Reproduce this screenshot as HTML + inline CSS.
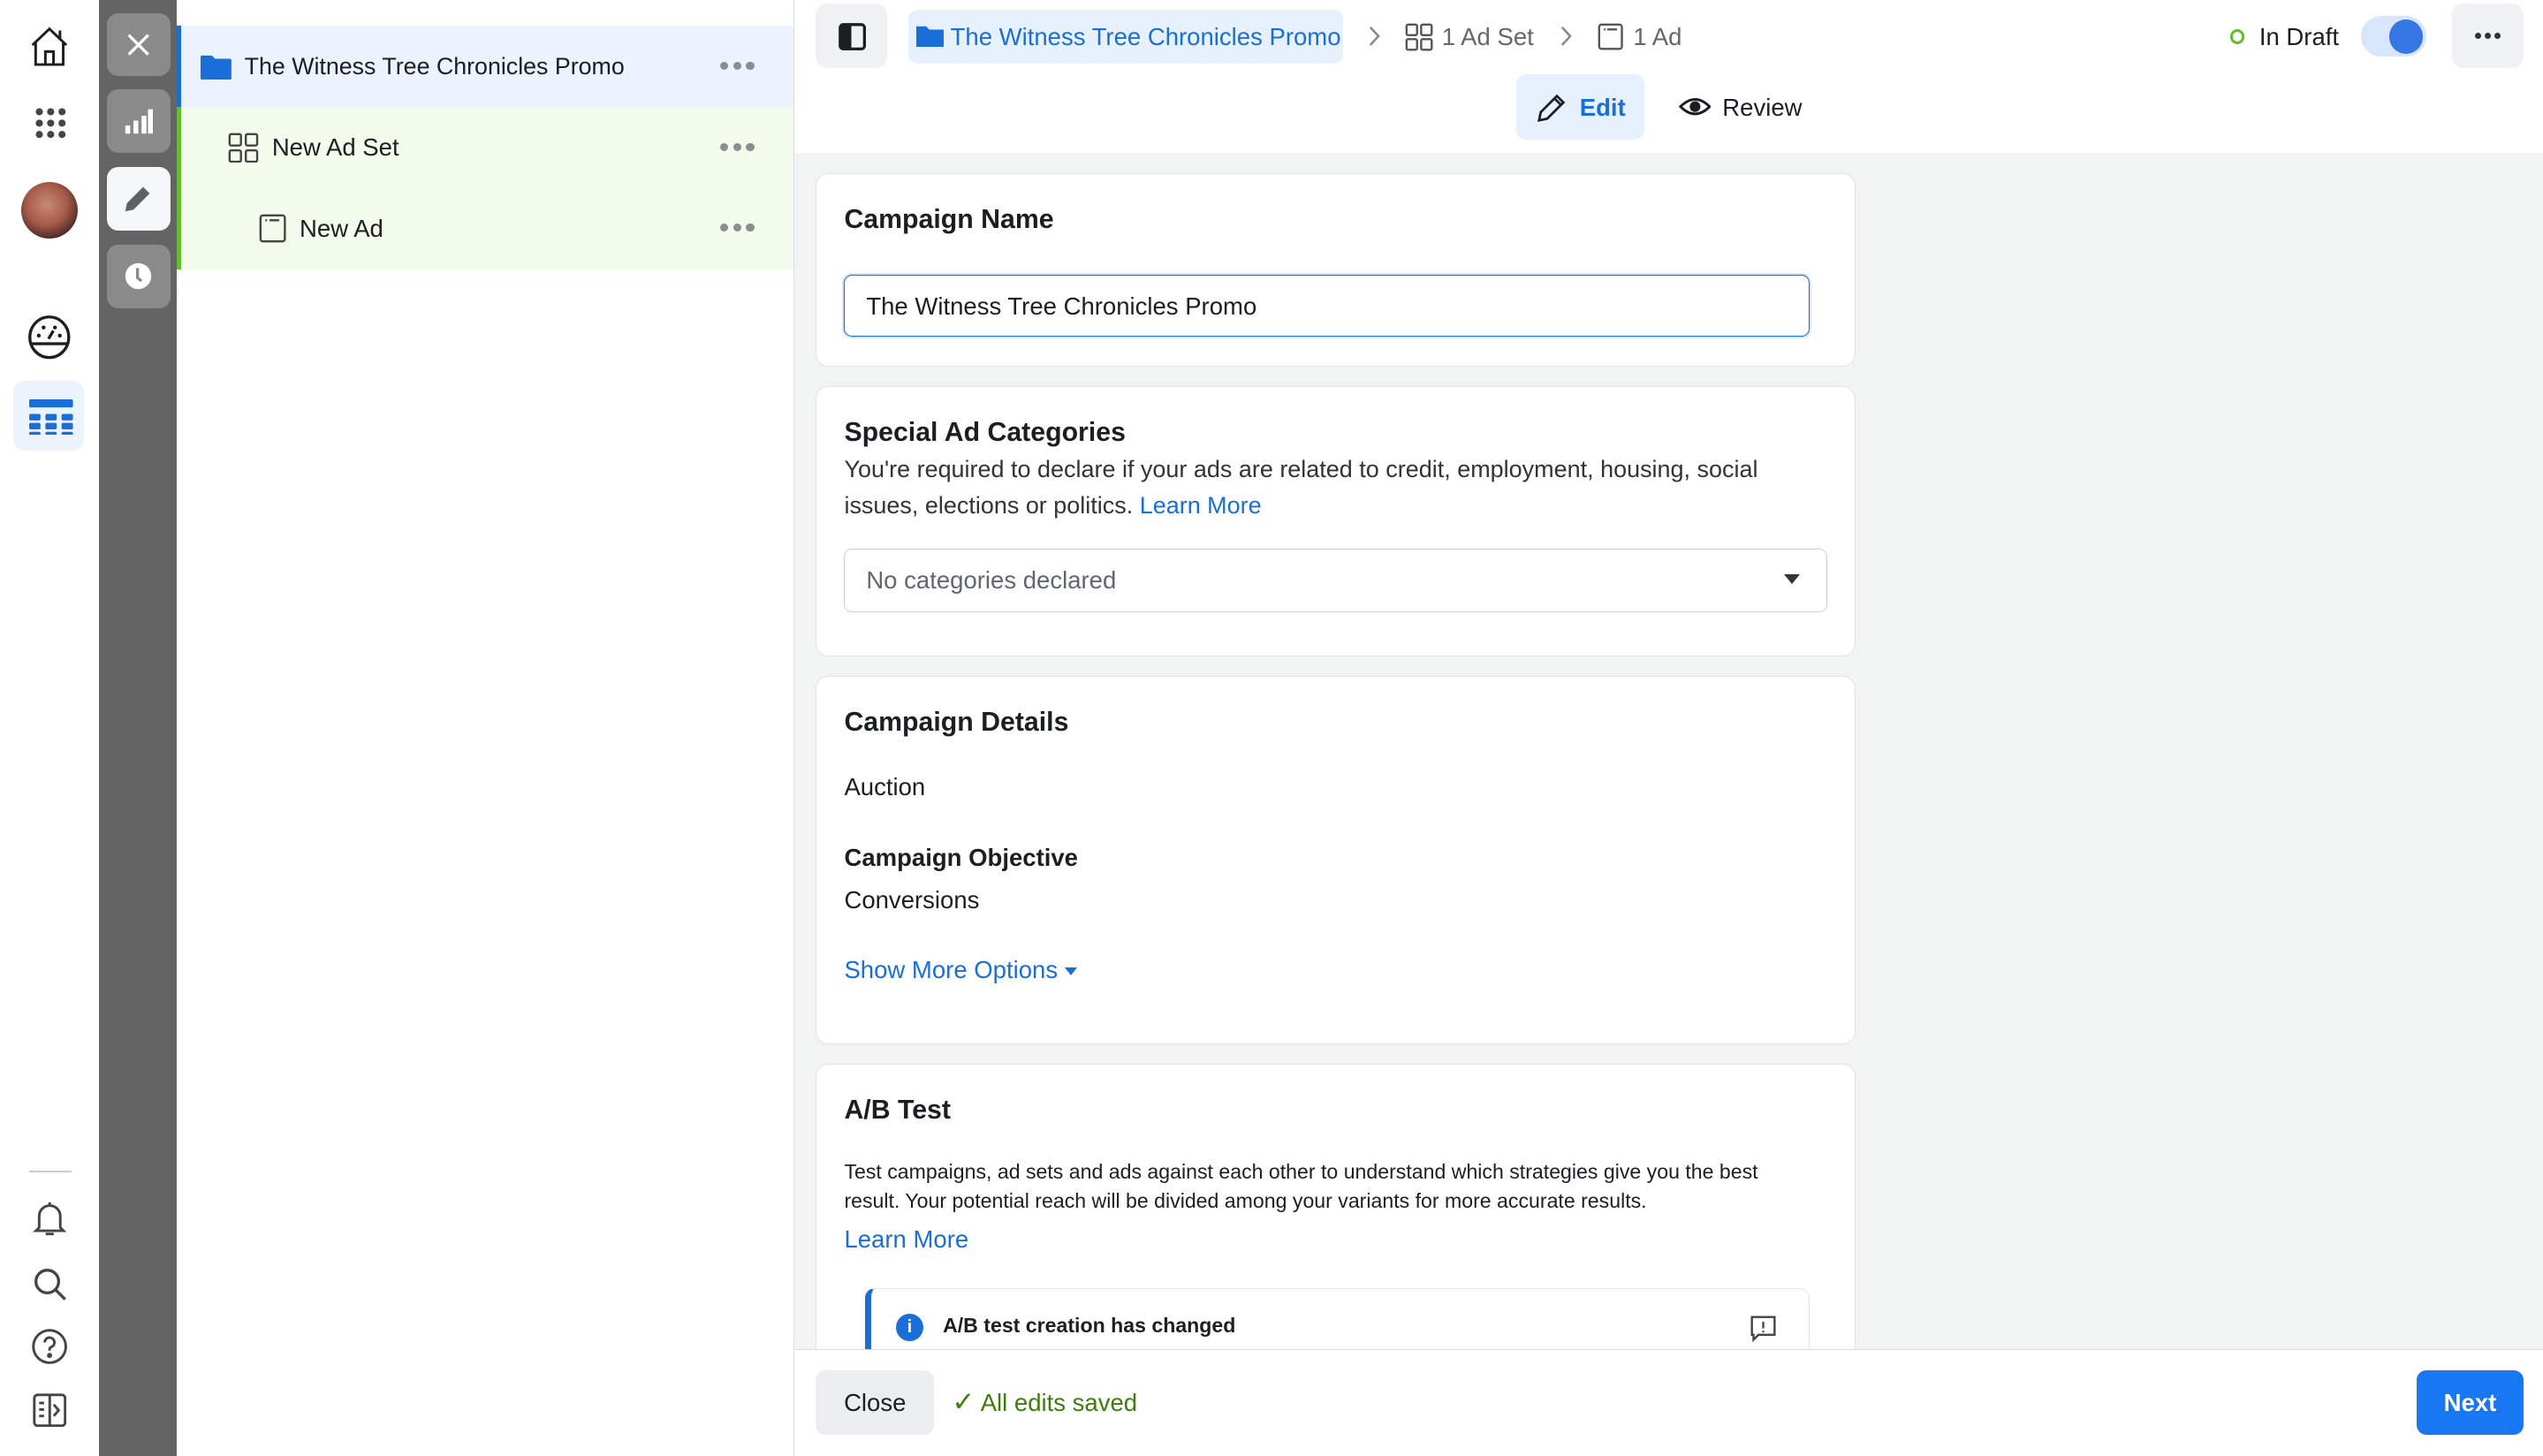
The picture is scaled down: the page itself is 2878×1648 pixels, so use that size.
<!DOCTYPE html>
<html><head><meta charset="utf-8"><style>
*{box-sizing:border-box;margin:0;padding:0}
html,body{width:2878px;height:1648px;overflow:hidden;background:#fff}
#r{zoom:1.8355;width:1568px;height:898px;position:relative;font-family:"Liberation Sans",Arial,sans-serif;color:#1c1e21;overflow:hidden}
.a{position:absolute}
.nav{left:0;top:0;width:61px;height:898px;background:#fff}
.rail{left:61px;top:0;width:48px;height:898px;background:#646464}
.rb{left:5px;width:39px;height:39px;border-radius:7px;background:#8a8a8a;display:flex;align-items:center;justify-content:center}
.tree{left:109px;top:0;width:381px;height:898px;background:#fff;border-right:1px solid #dadde1}
.row{left:0;width:380px;height:50px;display:flex;align-items:center;font-size:15px}
.dots{position:absolute;right:24px;top:22px;display:flex;gap:3px}
.dots i{width:5px;height:5px;border-radius:50%;background:#8a8d91;display:block}
.main{left:490px;top:0;width:1078px;height:898px;background:#f2f3f3}
.card{left:13px;width:641px;background:#fff;border:1px solid #e3e4e6;border-radius:8px}
.h{font-size:17px;font-weight:bold;position:absolute;left:17px}
.t{position:absolute;left:17px;font-size:15px}
.blue{color:#1a6ed8}
</style></head><body><div id="r">

<div class="a nav">
 <svg class="a" style="left:18px;top:16px" width="25" height="26" viewBox="0 0 25 26" fill="none" stroke="#1c1e21" stroke-width="1.6"><path d="M2 12 L12.5 2 L23 12 M4 10 V24 H21 V10 M10 24 V16 H15 V24 M19 8 V3"/></svg>
 <svg class="a" style="left:21px;top:66px" width="20" height="20"><g fill="#444"><circle cx="3" cy="3" r="2.2"/><circle cx="10" cy="3" r="2.2"/><circle cx="17" cy="3" r="2.2"/><circle cx="3" cy="10" r="2.2"/><circle cx="10" cy="10" r="2.2"/><circle cx="17" cy="10" r="2.2"/><circle cx="3" cy="17" r="2.2"/><circle cx="10" cy="17" r="2.2"/><circle cx="17" cy="17" r="2.2"/></g></svg>
 <div class="a" style="left:13px;top:112px;width:35px;height:35px;border-radius:50%;background:radial-gradient(circle at 45% 40%,#c98a78 0,#a55a48 45%,#3a2220 80%)"></div>
 <svg class="a" style="left:17px;top:194px" width="27" height="28" fill="none" stroke="#1c1e21" stroke-width="1.8"><ellipse cx="13.5" cy="14" rx="12" ry="12.5"/><path d="M2 18 H25 M13 15 L16 10"/><g fill="#1c1e21" stroke="none"><circle cx="7" cy="13" r="1.2"/><circle cx="10" cy="8" r="1.2"/><circle cx="17" cy="8" r="1.2"/><circle cx="20" cy="13" r="1.2"/></g></svg>
 <div class="a" style="left:8px;top:235px;width:44px;height:43px;border-radius:7px;background:#ebf3fd"></div>
 <svg class="a" style="left:18px;top:246px" width="27" height="22" fill="#1a6ed8"><rect x="0" y="0" width="27" height="5" rx="1"/><rect x="0" y="9" width="7" height="4" rx="1"/><rect x="10" y="9" width="7" height="4" rx="1"/><rect x="20" y="9" width="7" height="4" rx="1"/><rect x="0" y="14.5" width="7" height="4" rx="1"/><rect x="10" y="14.5" width="7" height="4" rx="1"/><rect x="20" y="14.5" width="7" height="4" rx="1"/><rect x="0" y="20" width="7" height="3" rx="1"/><rect x="10" y="20" width="7" height="3" rx="1"/><rect x="20" y="20" width="7" height="3" rx="1"/></svg>
 <div class="a" style="left:18px;top:722px;width:26px;height:1px;background:#ccc"></div>
 <svg class="a" style="left:20px;top:741px" width="21" height="22" fill="none" stroke="#444" stroke-width="1.6"><path d="M4 16 V9 a6.5 6.5 0 0 1 13 0 V16 L19 18 H2 Z M8 20 h5 M10.5 2 V0.5"/></svg>
 <svg class="a" style="left:20px;top:781px" width="22" height="22" fill="none" stroke="#444" stroke-width="1.8"><circle cx="9" cy="9" r="7"/><path d="M14 14 L20 20"/></svg>
 <svg class="a" style="left:19px;top:819px" width="23" height="23" fill="none" stroke="#444" stroke-width="1.6"><circle cx="11.5" cy="11.5" r="10"/><path d="M8.5 9 a3 3 0 1 1 4 2.8 c-1 .4 -1 1 -1 2.2"/><circle cx="11.5" cy="17" r=".8" fill="#444"/></svg>
 <svg class="a" style="left:20px;top:859px" width="21" height="21" fill="none" stroke="#444" stroke-width="1.6"><rect x="1" y="1" width="19" height="19" rx="2"/><path d="M10.5 1 V20 M4 6 h3 M4 10 h3 M4 14 h3 M13 7 l3 3.5 l-3 3.5"/></svg>
</div>

<div class="a rail">
 <div class="a rb" style="top:8px"><svg width="16" height="16" stroke="#fff" stroke-width="1.8"><path d="M2 2 L14 14 M14 2 L2 14"/></svg></div>
 <div class="a rb" style="top:55px"><svg width="18" height="18" fill="#fff"><rect x="1" y="12" width="3" height="5"/><rect x="6" y="9" width="3" height="8"/><rect x="11" y="6" width="3" height="11"/><rect x="15" y="2" width="3" height="15"/></svg></div>
 <div class="a rb" style="top:103px;background:#f5f6f7"><svg width="18" height="18" fill="#606060"><path d="M1 17 L2 12 L12 2 L16 6 L6 16 Z"/></svg></div>
 <div class="a rb" style="top:151px"><svg width="18" height="18"><circle cx="9" cy="9" r="8" fill="#fff"/><path d="M8.5 4 V10 L11 12" stroke="#8a8a8a" stroke-width="1.8" fill="none"/></svg></div>
</div>

<div class="a tree">
 <div class="a row" style="top:16px;background:#ebf3fe;border-left:3px solid #1a6ed8">
  <svg style="margin-left:12px" width="19" height="16" fill="#1a6ed8"><path d="M0 2 a1 1 0 0 1 1-1 H7 L9 3 H18 a1 1 0 0 1 1 1 V15 a1 1 0 0 1 -1 1 H1 a1 1 0 0 1 -1-1 Z"/></svg>
  <span style="margin-left:8px;font-size:14.6px">The Witness Tree Chronicles Promo</span>
  <div class="dots"><i></i><i></i><i></i></div></div>
 <div class="a row" style="top:66px;background:#f2fbec;border-left:3px solid #63be2a">
  <svg style="margin-left:29px" width="19" height="19" fill="none" stroke="#444" stroke-width="1.3"><rect x="1" y="1" width="7" height="7" rx="1"/><rect x="11" y="1" width="7" height="7" rx="1"/><rect x="1" y="11" width="7" height="7" rx="1"/><rect x="11" y="11" width="7" height="7" rx="1"/></svg>
  <span style="margin-left:8px">New Ad Set</span>
  <div class="dots"><i></i><i></i><i></i></div></div>
 <div class="a row" style="top:116px;background:#f2fbec;border-left:3px solid #63be2a">
  <svg style="margin-left:48px" width="17" height="18" fill="none" stroke="#444" stroke-width="1.3"><rect x="1" y="1" width="15" height="16" rx="1.5"/><path d="M4 4 h1 M6.5 4 h6"/></svg>
  <span style="margin-left:8px">New Ad</span>
  <div class="dots"><i></i><i></i><i></i></div></div>
</div>

<div class="a main">
 <div class="a" style="left:0;top:0;width:1078px;height:94px;background:#fff"></div>
 <div class="a" style="left:13px;top:2px;width:44px;height:40px;border-radius:7px;background:#f0f1f2"></div>
 <svg class="a" style="left:27px;top:14px" width="17" height="17" fill="none" stroke="#1c1e21" stroke-width="1.8"><rect x="1" y="1" width="15" height="15" rx="2"/><rect x="2" y="2" width="5" height="13" fill="#1c1e21"/></svg>
 <div class="a" style="left:70px;top:6px;height:33px;border-radius:6px;background:#e7f1fd;width:268px"></div>
 <svg class="a" style="left:75px;top:15px" width="17" height="14" fill="#1a6ed8"><path d="M0 1 H6 L8 3 H17 V14 H0 Z"/></svg>
 <div class="a" style="left:96px;top:14px;font-size:15px;color:#1a6ed8">The Witness Tree Chronicles Promo</div>
 <svg class="a" style="left:354px;top:16px" width="8" height="13" fill="none" stroke="#888" stroke-width="1.4"><path d="M1 1 L6 6.5 L1 12"/></svg>
 <svg class="a" style="left:376px;top:14px" width="18" height="18" fill="none" stroke="#555" stroke-width="1.3"><rect x="1" y="1" width="6.5" height="6.5" rx="1"/><rect x="10" y="1" width="6.5" height="6.5" rx="1"/><rect x="1" y="10" width="6.5" height="6.5" rx="1"/><rect x="10" y="10" width="6.5" height="6.5" rx="1"/></svg>
 <div class="a" style="left:399px;top:14px;font-size:15px;color:#65676b">1 Ad Set</div>
 <svg class="a" style="left:472px;top:16px" width="8" height="13" fill="none" stroke="#888" stroke-width="1.4"><path d="M1 1 L6 6.5 L1 12"/></svg>
 <svg class="a" style="left:495px;top:14px" width="16" height="17" fill="none" stroke="#555" stroke-width="1.3"><rect x="1" y="1" width="14" height="15" rx="1.5"/><path d="M4 4 h1 M6 4 h6"/></svg>
 <div class="a" style="left:517px;top:14px;font-size:15px;color:#65676b">1 Ad</div>
 <div class="a" style="left:885px;top:18px;width:9px;height:9px;border-radius:50%;border:2px solid #63be2a"></div>
 <div class="a" style="left:903px;top:14px;font-size:15px">In Draft</div>
 <div class="a" style="left:966px;top:10px;width:40px;height:25px;border-radius:13px;background:#d7e6fb"></div>
 <div class="a" style="left:983px;top:12px;width:21px;height:21px;border-radius:50%;background:#3578e5"></div>
 <div class="a" style="left:1022px;top:2px;width:44px;height:40px;border-radius:7px;background:#f0f1f2"></div>
 <div class="a" style="left:1036px;top:20px;display:flex;gap:2px"><i style="width:4px;height:4px;border-radius:50%;background:#333;display:block"></i><i style="width:4px;height:4px;border-radius:50%;background:#333;display:block"></i><i style="width:4px;height:4px;border-radius:50%;background:#333;display:block"></i></div>
 <div class="a" style="left:445px;top:46px;width:79px;height:40px;border-radius:6px;background:#e7f1fd"></div>
 <svg class="a" style="left:458px;top:57px" width="18" height="18" fill="none" stroke="#1c1e21" stroke-width="1.5"><path d="M1 17 L2 12 L12 2 L16 6 L6 16 Z M10.5 3.5 L14.5 7.5"/></svg>
 <div class="a" style="left:484px;top:58px;font-size:15px;font-weight:bold;color:#1a6ed8">Edit</div>
 <svg class="a" style="left:545px;top:58px" width="20" height="16" fill="none" stroke="#1c1e21" stroke-width="1.6"><path d="M1 8 Q10 -1 19 8 Q10 17 1 8 Z"/><circle cx="10" cy="8" r="2.5" fill="#1c1e21"/></svg>
 <div class="a" style="left:572px;top:58px;font-size:15px">Review</div>

 <div class="a card" style="top:107px;height:119px">
  <div class="h" style="top:19px;font-size:16.5px">Campaign Name</div>
  <div class="a" style="left:17px;top:62px;width:595px;height:38px;border:1px solid #1a6ed8;border-radius:5px;box-shadow:0 0 0 1px #d0e2fb;font-size:15px;padding:10px 13px">The Witness Tree Chronicles Promo</div>
 </div>
 <div class="a card" style="top:238px;height:167px">
  <div class="h" style="top:19px;font-size:16.5px">Special Ad Categories</div>
  <div class="t" style="top:40px;line-height:22px;width:600px;color:#333;font-size:14.7px">You're required to declare if your ads are related to credit, employment, housing, social issues, elections or politics. <span class="blue">Learn More</span></div>
  <div class="a" style="left:17px;top:100px;width:606px;height:39px;border:1px solid #ccd0d5;border-radius:5px;font-size:15px;color:#606770;padding:10px 13px">No categories declared<span style="position:absolute;right:16px;top:15px;border-left:5px solid transparent;border-right:5px solid transparent;border-top:6px solid #333"></span></div>
 </div>
 <div class="a card" style="top:417px;height:227px">
  <div class="h" style="top:19px;font-size:16.5px">Campaign Details</div>
  <div class="t" style="top:59px">Auction</div>
  <div class="t" style="top:103px;font-weight:bold">Campaign Objective</div>
  <div class="t" style="top:129px">Conversions</div>
  <div class="t blue" style="top:172px">Show More Options <span style="display:inline-block;border-left:4px solid transparent;border-right:4px solid transparent;border-top:5px solid #1a6ed8;vertical-align:middle"></span></div>
 </div>
 <div class="a card" style="top:656px;height:260px">
  <div class="h" style="top:19px;font-size:16.5px">A/B Test</div>
  <div class="t" style="top:57px;font-size:12.6px;line-height:18px;width:600px">Test campaigns, ad sets and ads against each other to understand which strategies give you the best result. Your potential reach will be divided among your variants for more accurate results.</div>
  <div class="t blue" style="top:99px">Learn More</div>
  <div class="a" style="left:30px;top:138px;width:582px;height:80px;border:1px solid #e3e4e6;border-left:4px solid #1a6ed8;border-radius:6px">
   <div class="a" style="left:15px;top:15px;width:17px;height:17px;border-radius:50%;background:#1a6ed8;color:#fff;font-size:11px;font-weight:bold;text-align:center;line-height:17px">i</div>
   <div class="a" style="left:44px;top:15px;font-size:12.6px;font-weight:bold">A/B test creation has changed</div>
   <svg class="a" style="left:541px;top:15px" width="18" height="18" fill="none" stroke="#444" stroke-width="1.3"><path d="M2 2 H16 V13 H6 L3 16 V13 H2 Z M9 5 V9 M9 10.5 V11.5"/></svg>
  </div>
 </div>

 <div class="a" style="left:0;top:832px;width:1078px;height:66px;background:#fff;border-top:1px solid #dadde1"></div>
 <div class="a" style="left:13px;top:845px;width:73px;height:40px;border-radius:6px;background:#ebedf0;font-size:15px;text-align:center;line-height:40px">Close</div>
 <div class="a" style="left:97px;top:855px;font-size:15px;color:#3c7d0c"><span style="font-size:17px">✓</span> All edits saved</div>
 <div class="a" style="left:1000px;top:845px;width:66px;height:40px;border-radius:6px;background:#1877f2;color:#fff;font-size:15px;font-weight:bold;text-align:center;line-height:40px">Next</div>
</div>
</div></body></html>
